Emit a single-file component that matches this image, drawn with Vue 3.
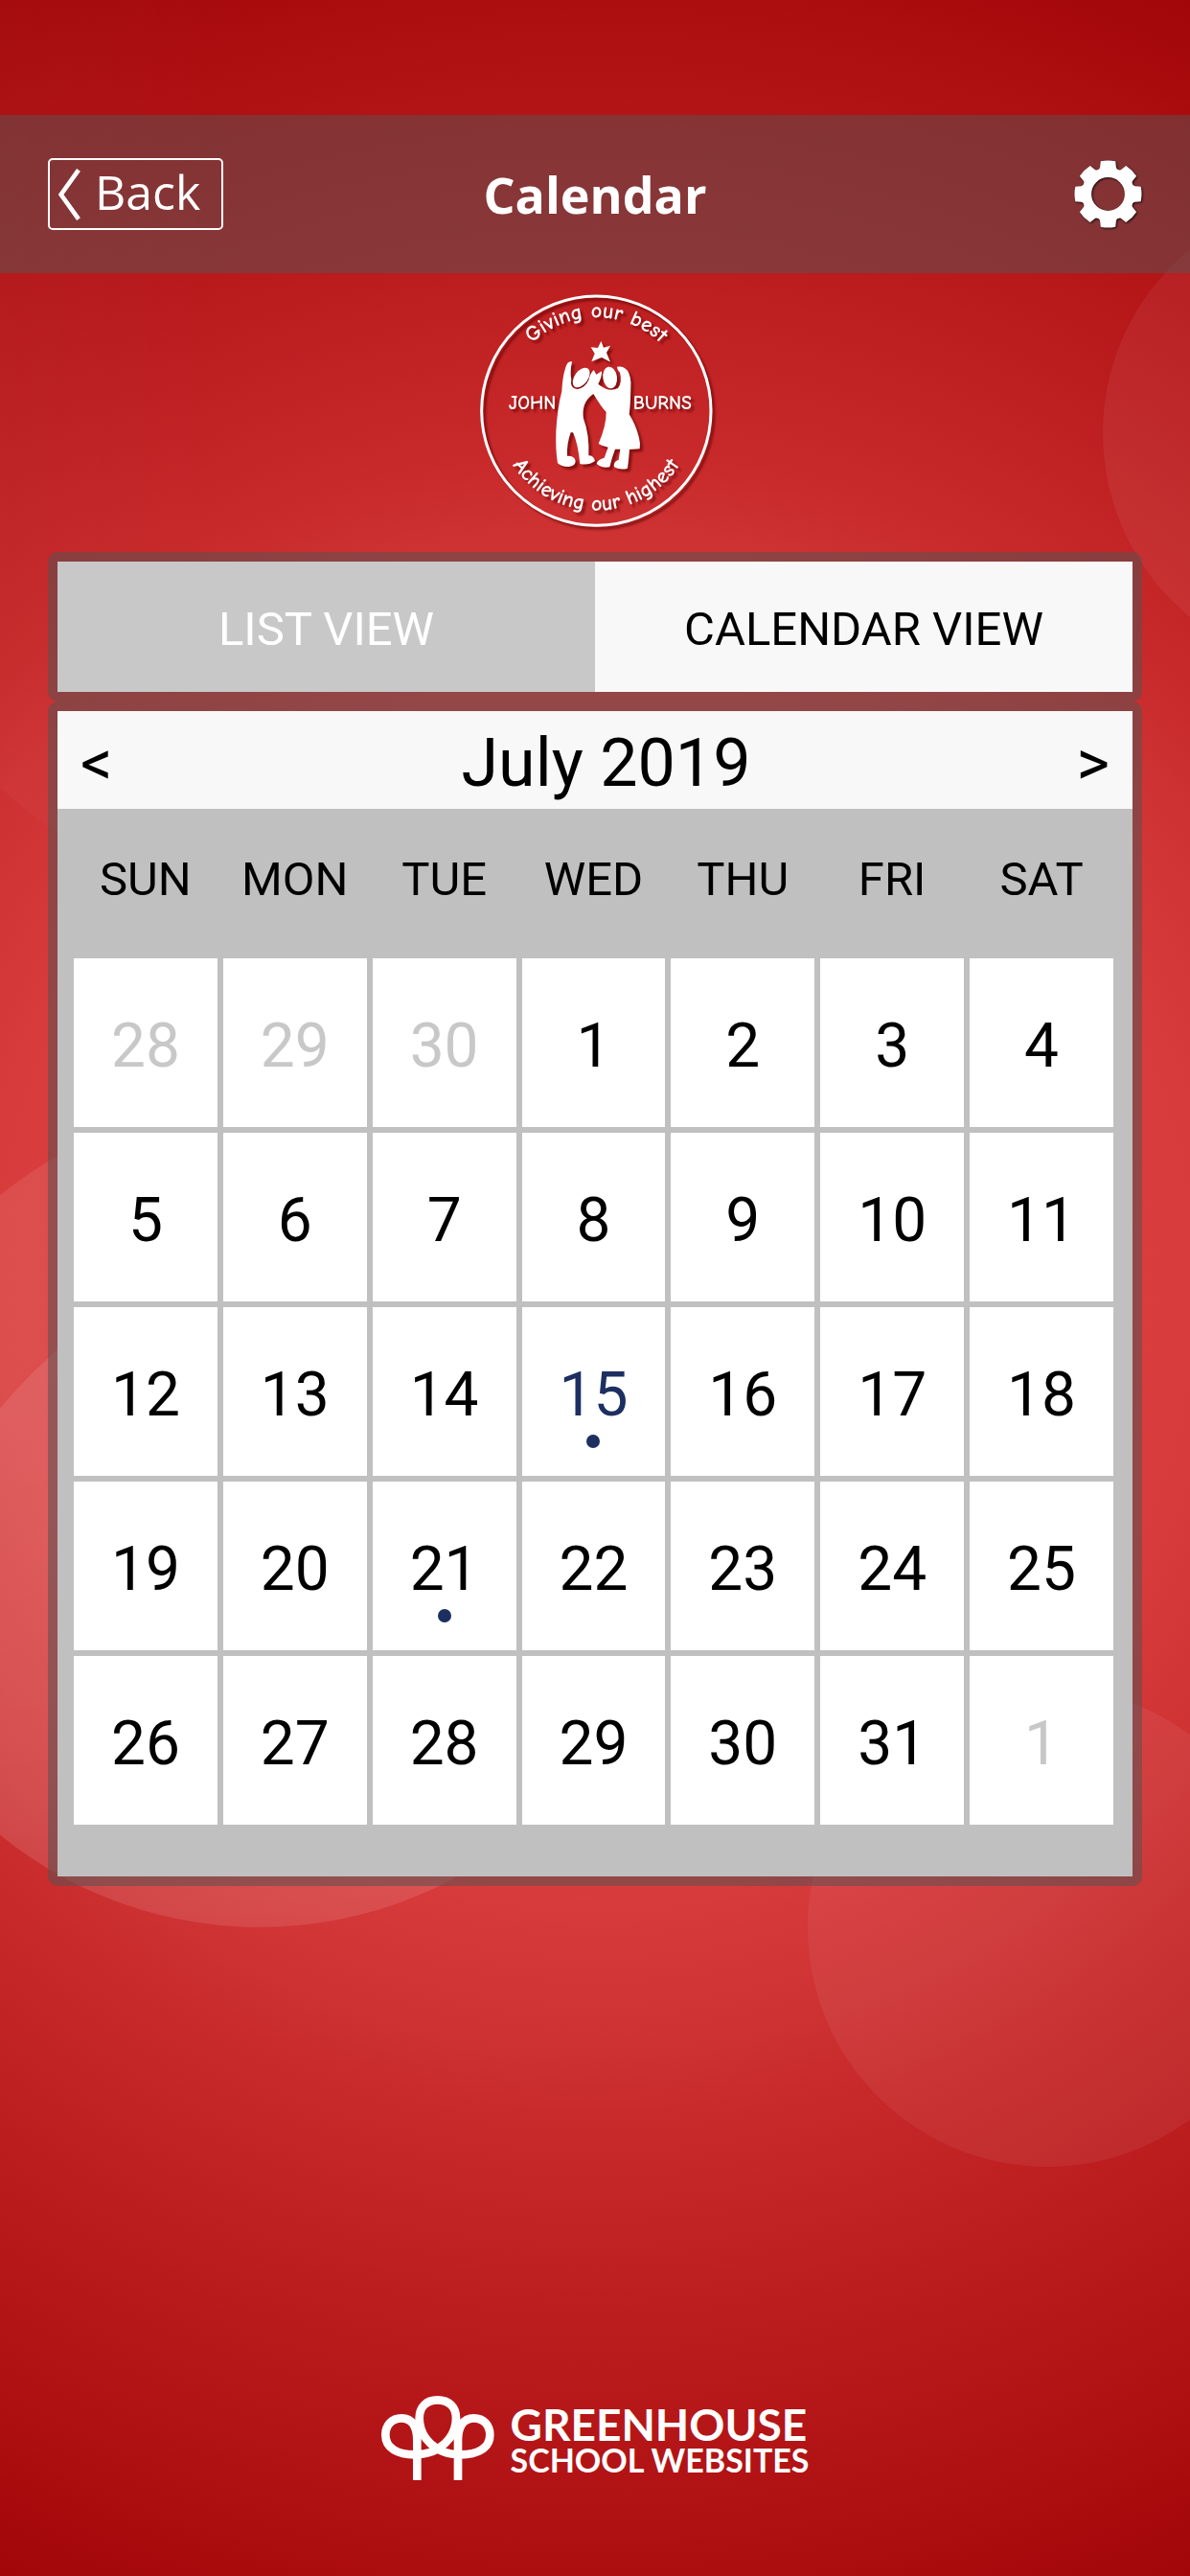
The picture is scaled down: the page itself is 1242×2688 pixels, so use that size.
<template>
  <div class="page">
    <svg class="bubbles" viewBox="0 0 1242 2688" preserveAspectRatio="xMidYMid slice" aria-hidden="true">
      <defs>
        <linearGradient id="fade-right">
          <stop offset="0" stop-color="#fff" stop-opacity="0.05" />
          <stop offset="0.35" stop-color="#fff" stop-opacity="0" />
        </linearGradient>
        <linearGradient id="fade-down" x2="0" y2="1">
          <stop offset="0" stop-color="#fff" stop-opacity="0.12" />
          <stop offset="0.5" stop-color="#fff" stop-opacity="0.05" />
          <stop offset="0.6" stop-color="#fff" stop-opacity="0.01" />
        </linearGradient>
        <clipPath id="big-bubble">
          <circle cx="271" cy="1581" r="430" />
        </clipPath>
      </defs>
      <circle cx="500" cy="250" r="760" fill="url(#fade-right)" />
      <circle cx="1399" cy="452" r="248" fill="#fff" fill-opacity="0.06" />
      <circle cx="271" cy="1581" r="430" fill="#fff" fill-opacity="0.09" />
      <circle cx="500" cy="1900" r="660" fill="url(#fade-down)" clip-path="url(#big-bubble)" />
      <circle cx="1093" cy="2011" r="250" fill="#fff" fill-opacity="0.06" />
    </svg>

    <header class="topbar">
      <button class="back-btn" type="button">
        <svg width="23" height="54" viewBox="183 223 69 162" aria-hidden="true">
          <path d="M246 227 L191 304 L246 381" fill="none" stroke="#fff" stroke-width="14" />
        </svg>
        <span>Back</span>
      </button>
      <h1>Calendar</h1>
      <button class="gear-btn" type="button" aria-label="Settings">
        <svg width="71" height="71" viewBox="-106 -106 212 212" aria-hidden="true">
          <circle r="67" fill="none" stroke="#fff" stroke-width="30" />
          <path
            v-for="n in 8"
            :key="n"
            :transform="`rotate(${n * 45})`"
            d="M-40 -70 Q-26 -74 -25 -84 L-23 -102 Q0 -107 23 -102 L25 -84 Q26 -74 40 -70 Z"
            fill="#fff"
          />
        </svg>
      </button>
    </header>

    <svg class="crest" width="280" height="280" viewBox="0 0 840 840" role="img" aria-label="School crest">
      <defs>
        <path id="arc-top" d="M132 416 A292 292 0 0 1 716 416" />
        <path id="arc-bottom" d="M112 416 A312 312 0 0 0 736 416" />
      </defs>
      <circle cx="424" cy="416" r="359" fill="none" stroke="#fff" stroke-width="9" />
      <g fill="#fff">
        <text class="motto" text-anchor="middle"><textPath href="#arc-top" startOffset="50%">Giving our best</textPath></text>
        <text class="motto" text-anchor="middle"><textPath href="#arc-bottom" startOffset="50%">Achieving our highest</textPath></text>
        <text class="name" x="298" y="412" text-anchor="end">JOHN</text>
        <text class="name" x="539" y="412">BURNS</text>
      </g>
      <g fill="#fff">
        <path d="M439 198 L447 218 L468 212 L456 234 L468 263 L441 249 L409 262 L419 237 L407 217 L429 219 Z" />
        <ellipse cx="377" cy="312" rx="21" ry="35" transform="rotate(36 377 312)" />
        <ellipse cx="467" cy="312" rx="22" ry="34" transform="rotate(-8 467 312)" />
        <path
          d="M348 262 Q334 258 328 280 Q318 310 316 355 Q302 410 298 480 Q296 540 303 580 Q315 592 338 591
             Q360 588 359 572 Q355 556 333 557 Q331 520 344 484 L351 484 Q366 515 373 582 Q400 588 420 573
             Q416 556 400 556 Q403 490 384 440 Q376 390 415 363 Q440 405 455 420 Q456 460 431 519
             Q444 528 461 530 L449 563 Q426 570 425 582 Q440 596 466 592 Q472 565 483 536 L499 536
             L494 569 Q476 576 480 592 Q500 603 522 596 Q526 565 528 537 L560 535 Q563 520 558 500
             Q548 460 527 427 Q531 400 532 340 Q534 310 522 290 Q508 274 489 278 Q489 288 498 296
             Q506 325 492 345 Q462 360 430 332 Q442 310 441 292 L424 302 L416 288 Q404 300 401 318
             Q390 344 364 349 Q340 345 346 318 Q341 295 348 262 Z"
        />
      </g>
    </svg>

    <div class="card tabs">
      <button
        v-for="tab in tabs"
        :key="tab"
        type="button"
        class="tab"
        :class="{ active: tab === view }"
        @click="view = tab"
      >{{ tab }}</button>
    </div>

    <main class="card">
      <div class="month-bar">
        <button type="button" class="arrow" aria-label="Previous month">&lt;</button>
        <h2>July 2019</h2>
        <button type="button" class="arrow" aria-label="Next month">&gt;</button>
      </div>
      <div class="month">
        <table>
          <thead>
            <tr>
              <th v-for="d in weekdays" :key="d" scope="col">{{ d }}</th>
            </tr>
          </thead>
          <tbody>
            <tr v-for="(week, i) in weeks" :key="i">
              <td v-for="day in week" :key="day.n" :class="{ muted: day.other, today: day.today }">
                {{ day.n }}
                <span v-if="day.event" class="dot"></span>
              </td>
            </tr>
          </tbody>
        </table>
      </div>
    </main>

    <footer class="brand">
      <svg width="118" height="88" viewBox="57 60 354 264" aria-hidden="true">
        <path
          d="M169 324 V200 C169 158 155 130 120 130 C90 130 70 152 70 182 C70 225 110 244 160 244
             C240 244 291 190 291 130 C291 95 268 73 233 73 C198 73 176 95 176 130
             C176 190 226 244 306 244 C356 244 397 225 397 182 C397 152 377 130 347 130
             C312 130 297 158 297 200 V324"
          fill="none"
          stroke="#fff"
          stroke-width="26"
        />
      </svg>
      <div class="brand-text">
        <div class="brand-name">GREENHOUSE</div>
        <div class="brand-sub">SCHOOL WEBSITES</div>
      </div>
    </footer>
  </div>
</template>

<script setup>
import { ref } from 'vue'

const tabs = ['LIST VIEW', 'CALENDAR VIEW']
const view = ref('CALENDAR VIEW')

const weekdays = ['SUN', 'MON', 'TUE', 'WED', 'THU', 'FRI', 'SAT']
const events = [15, 21]

const days = [
  ...[28, 29, 30].map(n => ({ n, other: true })),
  ...Array.from({ length: 31 }, (_, i) => ({
    n: i + 1,
    today: i + 1 === 15,
    event: events.includes(i + 1),
  })),
  { n: 1, other: true },
]
const weeks = Array.from({ length: 5 }, (_, i) => days.slice(i * 7, i * 7 + 7))
</script>

<style>
body {
  margin: 0;
}
</style>

<style scoped>
.page {
  position: relative;
  display: flex;
  flex-direction: column;
  box-sizing: border-box;
  min-height: 100vh;
  padding: 120px 0 100px;
  background: radial-gradient(
    circle farthest-corner at center,
    #dd4142 0%,
    #d93c3d 42%,
    #cd3132 54%,
    #c72829 60%,
    #bb1c1e 73%,
    #ac0d0f 91%,
    #a20608 100%
  );
  font-family: Roboto, "Liberation Sans", sans-serif;
  color: #000;
}
.page > * {
  position: relative;
}
.page > .bubbles {
  position: absolute;
  inset: 0;
  width: 100%;
  height: 100%;
}
button {
  margin: 0;
  padding: 0;
  border: 0;
  background: none;
  font: inherit;
  color: inherit;
  cursor: pointer;
}
h1,
h2 {
  margin: 0;
}

.topbar {
  display: grid;
  grid-template-columns: 1fr auto 1fr;
  align-items: center;
  height: 165px;
  padding: 0 50px;
  background: rgba(88, 83, 83, 0.5);
  color: #fff;
  font-family: "Open Sans", "Noto Sans", sans-serif;
}
.topbar h1 {
  font-size: 52px;
  font-weight: 700;
  line-height: 72px;
}
.back-btn {
  display: flex;
  align-items: center;
  justify-self: start;
  gap: 15px;
  box-sizing: border-box;
  height: 75px;
  padding: 0 22px 0 9px;
  border: 2px solid #fff;
  border-radius: 5px;
  font-size: 50px;
  line-height: 64px;
}
.back-btn span {
  padding-bottom: 6px;
}
.gear-btn {
  justify-self: end;
}
.gear-btn svg {
  display: block;
  filter: drop-shadow(1px 1px 1px rgba(0, 0, 0, 0.8));
}

.crest {
  align-self: center;
  margin: 5px 0 6px;
  filter: drop-shadow(3px 3px 1px rgba(90, 0, 0, 0.6));
  font-family: "Comic Sans MS", "Comic Neue", "Noto Sans", sans-serif;
  font-weight: 700;
}
.motto {
  font-size: 67px;
}
.name {
  font-size: 60px;
}

.card {
  margin: 0 50px;
  padding: 10px;
  border-radius: 10px;
  background: rgba(92, 80, 80, 0.56);
}
.tabs {
  display: flex;
}
.tab {
  flex: 1;
  height: 136px;
  padding-top: 4px;
  background: #c8c8c8;
  color: #fff;
  font-size: 49px;
}
.tab.active {
  background: #f8f8f8;
  color: #000;
}

.month-bar {
  display: flex;
  align-items: center;
  justify-content: space-between;
  box-sizing: border-box;
  height: 102px;
  padding: 6px 24px 0;
  background: #f8f8f8;
}
.month-bar h2 {
  padding-left: 24px;
  font-size: 70px;
  font-weight: 400;
}
.arrow {
  font-size: 66px;
}
.month {
  padding: 0 14px 48px 11px;
  background: #c0c0c0;
}
table {
  width: 100%;
  table-layout: fixed;
  border-collapse: separate;
  border-spacing: 6px;
}
th {
  height: 134px;
  padding: 0 0 10px;
  font-size: 49px;
  font-weight: 400;
}
td {
  position: relative;
  height: 170px;
  padding: 6px 0 0;
  background: #fff;
  font-size: 64px;
  text-align: center;
}
.muted {
  color: #c8c8c8;
}
.today {
  color: #1c2f60;
}
.dot {
  position: absolute;
  bottom: 29px;
  left: 50%;
  width: 14px;
  height: 14px;
  margin-left: -7px;
  border-radius: 50%;
  background: #1c2f60;
}

.brand {
  display: flex;
  align-items: center;
  justify-content: center;
  gap: 17px;
  margin-top: auto;
  color: #fff;
  font-family: Lato, sans-serif;
  font-weight: 700;
}
.brand-text {
  padding-top: 6px;
}
.brand-name {
  font-size: 46px;
  line-height: 40px;
}
.brand-sub {
  font-size: 34px;
  line-height: 34px;
}
</style>
